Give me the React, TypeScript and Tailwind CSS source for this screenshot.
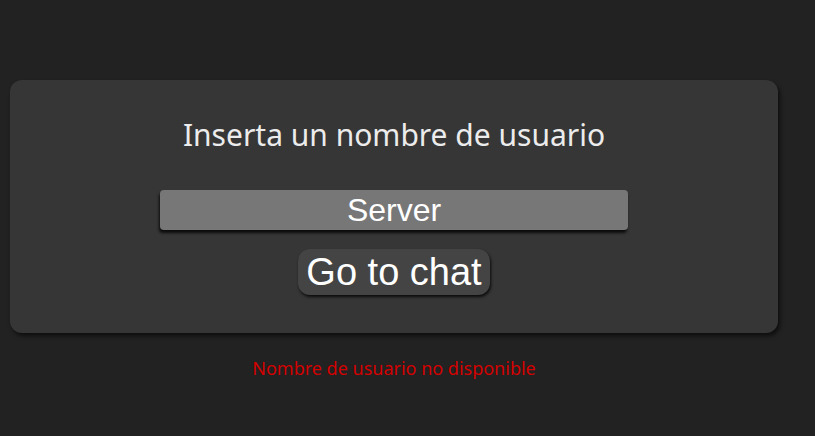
import React from "react";

const App = () => {
  const [name, setName] = React.useState("Server");

  return (
    <main className="min-h-screen w-full bg-[#222222] pt-[80px]">
      {/* Login card */}
      <div className="ml-[10px] w-[768px] h-[253px] rounded-[12px] bg-[#363636] shadow-[2px_3px_4px_rgba(0,0,0,0.6)] flex flex-col items-center pt-[35px]">
        <h1 className="text-[30px] leading-[40px] text-[#ececec] font-['Noto_Sans',sans-serif]">
          Inserta un nombre de usuario
        </h1>
        <input
          value={name}
          onChange={e => setName(e.target.value)}
          className="mt-[35px] w-[468px] h-[40px] rounded-[4px] bg-[#777777] text-center text-white text-[32px] font-['Liberation_Sans',Arial,sans-serif] shadow-[-1px_3px_3px_rgba(0,0,0,0.8)] outline-none"
        />
        <button className="mt-[19px] h-[46px] px-[8px] rounded-[12px] bg-[#444444] text-white text-[38px] leading-[42px] font-['Liberation_Sans',Arial,sans-serif] shadow-[1px_2px_3px_rgba(0,0,0,0.8)]">
          Go to chat
        </button>
      </div>

      {/* Error */}
      <p className="ml-[10px] w-[768px] mt-[22px] text-center text-[18px] text-[#d40000] font-['Noto_Sans',sans-serif]">
        Nombre de usuario no disponible
      </p>
    </main>
  );
};

export default App;
